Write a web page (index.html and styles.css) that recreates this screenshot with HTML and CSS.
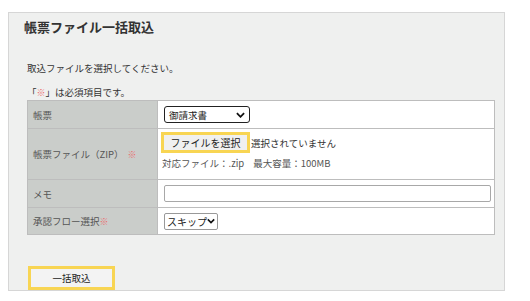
FILE: index.html
```html
<!DOCTYPE html>
<html lang="ja">
<head>
<meta charset="utf-8">
<link rel="stylesheet" href="styles.css">
</head>
<body>
<div class="panel">
  <h1 class="title">帳票ファイル一括取込</h1>
  <p class="lead">取込ファイルを選択してください。</p>
  <p class="note">「<span class="req">※</span>」は必須項目です。</p>
  <table class="form">
    <tr class="r1">
      <th>帳票</th>
      <td>
        <div class="select sel-doc"><span>御請求書</span><svg class="chev" viewBox="0 0 10 6" width="9" height="6"><path d="M1 1 L5 5 L9 1" fill="none" stroke="#111" stroke-width="2"/></svg></div>
      </td>
    </tr>
    <tr class="r2">
      <th>帳票ファイル（ZIP）<span class="req sp">※</span></th>
      <td class="filecell">
        <div class="filerow"><span class="hl"><span class="filebtn">ファイルを選択</span></span><span class="nofile">選択されていません</span></div>
        <div class="fileinfo"><span>対応ファイル：.zip</span><span class="max">最大容量：100MB</span></div>
      </td>
    </tr>
    <tr class="r3">
      <th>メモ</th>
      <td><div class="memo"></div></td>
    </tr>
    <tr class="r4">
      <th>承認フロー選択<span class="req">※</span></th>
      <td>
        <div class="select sel-skip"><span>スキップ</span><svg class="chev" viewBox="0 0 10 6" width="8" height="6"><path d="M1 1 L5 5 L9 1" fill="none" stroke="#111" stroke-width="2"/></svg></div>
      </td>
    </tr>
  </table>
  <div class="actions"><span class="hl big"><span class="submit">一括取込</span></span></div>
</div>
</body>
</html>
```
FILE: styles.css
```css
html, body {
  margin: 0;
  padding: 0;
  background: #ffffff;
}
body {
  font-family: "Noto Sans CJK JP", "Noto Sans", sans-serif;
  color: #333;
}
.panel {
  box-sizing: border-box;
  width: 497px;
  height: 279px;
  margin: 12px 0 0 8px;
  border: 1px solid #d6d6d6;
  background: #eff0ef;
  padding: 6px 0 0 18px;
}
.title {
  margin: 0 0 0 -3px;
  font-size: 13px;
  line-height: 16px;
  font-weight: bold;
  color: #333;
}
.lead {
  margin: 26px 0 0 0;
  font-size: 9.5px;
  line-height: 14px;
  color: #333;
}
.note {
  margin: 10px 0 0 0;
  font-size: 9.5px;
  line-height: 14px;
  color: #333;
}
.req {
  color: #ec6a6a;
  font-size: 9px;
}
.sp {
  margin-left: 4px;
}
.form {
  border-collapse: collapse;
  width: 468px;
  font-size: 9.5px;
  color: #555;
}
.form th, .form td {
  border: 1px solid #bdbdbd;
  padding: 0;
  text-align: left;
  vertical-align: middle;
  font-weight: normal;
}
.form th {
  width: 130px;
  background: #cacdca;
  padding-left: 5px;
  box-sizing: border-box;
  color: #555;
}
.form td {
  background: #ffffff;
  padding-left: 5px;
}
.form td.filecell {
  vertical-align: top;
  padding-top: 3px;
  padding-left: 3px;
}
.r1 { height: 28px; }
.r2 { height: 51px; }
.r3 { height: 28px; }
.r4 { height: 27px; }
.select {
  box-sizing: border-box;
  display: flex;
  align-items: center;
  justify-content: space-between;
  background: #fff;
  color: #222;
  font-size: 9.5px;
  white-space: nowrap;
}
.sel-doc {
  width: 86px;
  height: 17px;
  border: 1.5px solid #222;
  border-radius: 3px;
  padding: 0 4px 0 4px;
  margin-left: 1px;
}
.sel-skip {
  width: 54px;
  height: 17px;
  border: 1px solid #999;
  border-radius: 2px;
  padding: 0 2px 0 2px;
  margin-left: 1px;
  font-size: 10px;
}
.filerow {
  display: flex;
  align-items: center;
}
.hl {
  display: inline-block;
  border: 3px solid #f8d553;
  box-sizing: border-box;
}
.filebtn {
  display: block;
  width: 83px;
  height: 15px;
  line-height: 15px;
  background: #f0f0f0;
  text-align: center;
  color: #222;
  font-size: 10px;
}
.nofile {
  margin-left: 1px;
  color: #333;
  font-size: 9.5px;
}
.fileinfo {
  margin-top: 3px;
  padding-left: 1px;
  color: #555;
  font-size: 9.5px;
  line-height: 14px;
}
.max {
  margin-left: 9px;
}
.memo {
  box-sizing: border-box;
  width: 327px;
  height: 17px;
  margin-left: 1px;
  border: 1px solid #a8a8a8;
  border-radius: 2px;
  background: #fff;
}
.actions {
  margin-top: 28px;
  margin-left: 1px;
}
.big .submit {
  display: block;
  width: 81px;
  height: 18px;
  line-height: 18px;
  background: #f3f3f3;
  text-align: center;
  color: #222;
  font-size: 9.5px;
}
```
